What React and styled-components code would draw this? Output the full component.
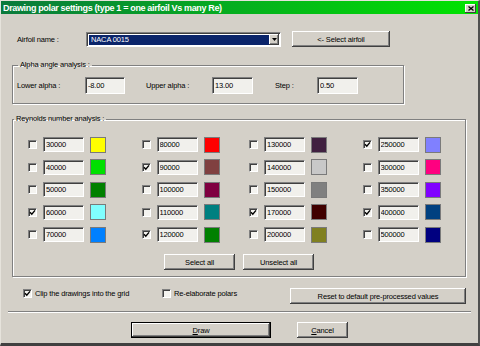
import React from 'react';
import styled, { createGlobalStyle, css } from 'styled-components';

const GlobalStyle = createGlobalStyle`
  html, body {
    margin: 0;
    padding: 0;
    background: #d4d0c8;
  }
`;

const rows = [
  [
    { re: '30000', color: '#ffff00', on: false },
    { re: '80000', color: '#ff0000', on: false },
    { re: '130000', color: '#402040', on: false },
    { re: '250000', color: '#8080ff', on: true },
  ],
  [
    { re: '40000', color: '#00e000', on: false },
    { re: '90000', color: '#804040', on: true },
    { re: '140000', color: '#c8c8c8', on: false },
    { re: '300000', color: '#ff0080', on: false },
  ],
  [
    { re: '50000', color: '#008000', on: false },
    { re: '100000', color: '#800040', on: false },
    { re: '150000', color: '#808080', on: false },
    { re: '350000', color: '#8000ff', on: false },
  ],
  [
    { re: '60000', color: '#80ffff', on: true },
    { re: '110000', color: '#008080', on: false },
    { re: '170000', color: '#400000', on: true },
    { re: '400000', color: '#004080', on: true },
  ],
  [
    { re: '70000', color: '#0080ff', on: false },
    { re: '120000', color: '#008000', on: true },
    { re: '200000', color: '#808020', on: false },
    { re: '500000', color: '#000080', on: false },
  ],
];

function CheckBox({ checked }) {
  return (
    <Check>
      {checked && (
        <svg width="7" height="7" viewBox="0 0 7 7">
          <path d="M1 3.2 L2.8 5.2 L6 1.4" fill="none" stroke="#000" strokeWidth="1.4" />
        </svg>
      )}
    </Check>
  );
}

export default function App() {
  return (
    <>
      <GlobalStyle />
      <Window>
        <TitleBar>
          <Title>Drawing polar settings (type 1 = one airfoil Vs many Re)</Title>
          <CloseBox>
            <svg width="6" height="5" viewBox="0 0 6 5">
              <path d="M0.5 0.5 L5.5 4.5 M5.5 0.5 L0.5 4.5" stroke="#000" strokeWidth="1.3" />
            </svg>
          </CloseBox>
        </TitleBar>

        <Body>
          <AirfoilRow>
            <Label $w={69}>Airfoil name :</Label>
            <Combo>
              <ComboValue>NACA 0015</ComboValue>
              <ComboArrow>
                <svg width="5" height="3" viewBox="0 0 5 3">
                  <path d="M0 0 H5 L2.5 3 Z" fill="#000" />
                </svg>
              </ComboArrow>
            </Combo>
            <Button $w={98} style={{ marginLeft: 11 }}>&lt;- Select airfoil</Button>
          </AirfoilRow>

          <Group $w={392} $top={13}>
            <Legend>Alpha angle analysis :</Legend>
            <AlphaRow>
              <Label $w={68}>Lower alpha :</Label>
              <Field $w={40} $h={17} readOnly value="-8.00" />
              <Label $w={66} $gap={21}>Upper alpha :</Label>
              <Field $w={41} $h={17} readOnly value="13.00" />
              <Label $w={42} $gap={22}>Step :</Label>
              <Field $w={41} $h={17} readOnly value="0.50" />
            </AlphaRow>
          </Group>

          <Group $w={454} $top={10} $pad="9.5px 0 6px 0">
            <Legend>Reynolds number analysis :</Legend>
            <ReGrid>
              {rows.map((row, r) =>
                row.map((cell, c) => (
                  <ReCell key={r + '-' + c}>
                    <CheckBox checked={cell.on} />
                    <Field $w={41} $h={15} $gap={6} readOnly value={cell.re} />
                    <Swatch $color={cell.color} />
                  </ReCell>
                ))
              )}
            </ReGrid>
            <CenterRow>
              <Button $w={71}>Select all</Button>
              <Button $w={71}>Unselect all</Button>
            </CenterRow>
          </Group>

          <OptionsRow>
            <Option $w={139}>
              <CheckBox checked />
              <span>Clip the drawings into the grid</span>
            </Option>
            <Option $w={128}>
              <CheckBox />
              <span>Re-elaborate polars</span>
            </Option>
            <Button $w={176}>Reset to default pre-processed values</Button>
          </OptionsRow>

          <Separator />

          <BottomRow>
            <Button $w={140} $default>
              <u>D</u>raw
            </Button>
            <Button $w={51} style={{ marginLeft: 26 }}>
              <u>C</u>ancel
            </Button>
          </BottomRow>
        </Body>
      </Window>
    </>
  );
}

const Window = styled.div`
  width: 480px;
  height: 346px;
  box-sizing: border-box;
  display: flex;
  flex-direction: column;
  background: #d4d0c8;
  border-top: 1px solid #e6e3dc;
  border-left: 1px solid #e6e3dc;
  border-right: 2px solid #505050;
  border-bottom: 3px solid #404040;
  font: 7.5px 'Liberation Sans', Arial, sans-serif;
  letter-spacing: -0.15px;
  color: #000;
  overflow: hidden;
`;

const TitleBar = styled.div`
  height: 13px;
  flex: none;
  display: flex;
  align-items: center;
  padding: 0 2px 0 2px;
  background: linear-gradient(to right, #0a7a3c, #00e400);
`;

const Title = styled.div`
  color: #fff;
  font: bold 9px 'Liberation Sans', Arial, sans-serif;
  letter-spacing: -0.35px;
  white-space: nowrap;
`;

const CloseBox = styled.div`
  margin-left: auto;
  width: 11px;
  height: 9px;
  box-sizing: border-box;
  background: #d4d0c8;
  box-shadow: inset -1px -1px #404040, inset 1px 1px #fff;
  display: flex;
  align-items: center;
  justify-content: center;
  margin-top: 1px;
`;

const Body = styled.div`
  flex: 1;
  display: flex;
  flex-direction: column;
  padding: 0 6px 0 7px;
`;

const Label = styled.span`
  flex: none;
  width: ${(p) => p.$w}px;
  margin-left: ${(p) => p.$gap || 0}px;
  white-space: nowrap;
`;

const AirfoilRow = styled.div`
  display: flex;
  align-items: center;
  height: 16px;
  margin-top: 17px;
  padding-left: 9px;
`;

const Combo = styled.div`
  width: 195px;
  height: 15px;
  box-sizing: border-box;
  display: flex;
  align-items: stretch;
  background: #fff;
  border-top: 1px solid #808080;
  border-left: 1px solid #808080;
  border-right: 1px solid #fff;
  border-bottom: 1px solid #fff;
  box-shadow: inset 1px 1px #404040;
  padding: 2px 1px 1px 2px;
`;

const ComboValue = styled.div`
  flex: 1;
  background: #0a246a;
  color: #fff;
  padding-left: 2px;
  display: flex;
  align-items: center;
`;

const ComboArrow = styled.div`
  width: 10px;
  flex: none;
  margin-top: -1px;
  background: #d4d0c8;
  box-shadow: inset -1px -1px #404040, inset 1px 1px #fff, inset -2px -2px #808080;
  display: flex;
  align-items: center;
  justify-content: center;
`;

const Button = styled.button`
  flex: none;
  box-sizing: border-box;
  width: ${(p) => p.$w}px;
  height: 16px;
  padding: 0;
  margin: 0;
  border: none;
  background: #d4d0c8;
  color: #000;
  font: inherit;
  letter-spacing: inherit;
  white-space: nowrap;
  box-shadow: inset -1px -1px #404040, inset 1px 1px #fff, inset -2px -2px #808080;

  u {
    text-decoration: underline;
  }

  ${(p) =>
    p.$default &&
    css`
      border: 1px solid #000;
      box-shadow: inset -1px -1px #404040, inset 1px 1px #fff, inset -2px -2px #808080;
    `}
`;

const Group = styled.fieldset`
  box-sizing: border-box;
  width: ${(p) => p.$w}px;
  margin: ${(p) => p.$top}px 0 0 4px;
  padding: ${(p) => p.$pad || '7px 0 9px 4px'};
  min-inline-size: 0;
  border: 1px solid #808080;
  box-shadow: 1px 1px 0 #fff, inset 1px 1px 0 #fff;
`;

const Legend = styled.legend`
  padding: 0 2px;
  margin-left: 1px;
  line-height: 10px;
  height: 10px;
`;

const AlphaRow = styled.div`
  display: flex;
  align-items: center;
`;

const Field = styled.input`
  flex: none;
  box-sizing: border-box;
  width: ${(p) => p.$w}px;
  height: ${(p) => p.$h}px;
  margin: 0 0 0 ${(p) => p.$gap || 0}px;
  padding: 0 0 0 2px;
  background: #f1f0ec;
  color: #000;
  font: inherit;
  letter-spacing: inherit;
  border-top: 1px solid #808080;
  border-left: 1px solid #808080;
  border-right: 1px solid #fff;
  border-bottom: 1px solid #fff;
  box-shadow: inset 1px 1px #404040;
  outline: none;
`;

const ReGrid = styled.div`
  display: grid;
  grid-template-columns: 113.5px 107.5px 113.5px 1fr;
  grid-auto-rows: 22.5px;
  margin-left: 15px;
`;

const ReCell = styled.div`
  display: flex;
  align-items: center;
`;

const Check = styled.span`
  flex: none;
  box-sizing: border-box;
  width: 9px;
  height: 9px;
  background: #f4f3ef;
  border-top: 1px solid #808080;
  border-left: 1px solid #808080;
  border-right: 1px solid #fff;
  border-bottom: 1px solid #fff;
  box-shadow: inset 1px 1px #404040;
  display: flex;
  align-items: center;
  justify-content: center;
`;

const Swatch = styled.div`
  flex: none;
  box-sizing: border-box;
  width: 16px;
  height: 16px;
  margin-left: 6px;
  background: ${(p) => p.$color};
  border: 1px solid #7a7a7a;
`;

const CenterRow = styled.div`
  display: flex;
  justify-content: center;
  gap: 8px;
  margin-top: 8px;
`;

const OptionsRow = styled.div`
  display: flex;
  align-items: flex-start;
  margin-top: 11px;
  padding-left: 15px;
  height: 16px;
`;

const Option = styled.label`
  flex: none;
  width: ${(p) => p.$w}px;
  display: flex;
  align-items: center;
  gap: 3px;
  margin-top: 1px;
  white-space: nowrap;
`;

const Separator = styled.div`
  margin-top: 7px;
  width: 463px;
  border-top: 1px solid #808080;
  border-bottom: 1px solid #fff;
`;

const BottomRow = styled.div`
  display: flex;
  margin-top: 9px;
  padding-left: 123px;
`;
